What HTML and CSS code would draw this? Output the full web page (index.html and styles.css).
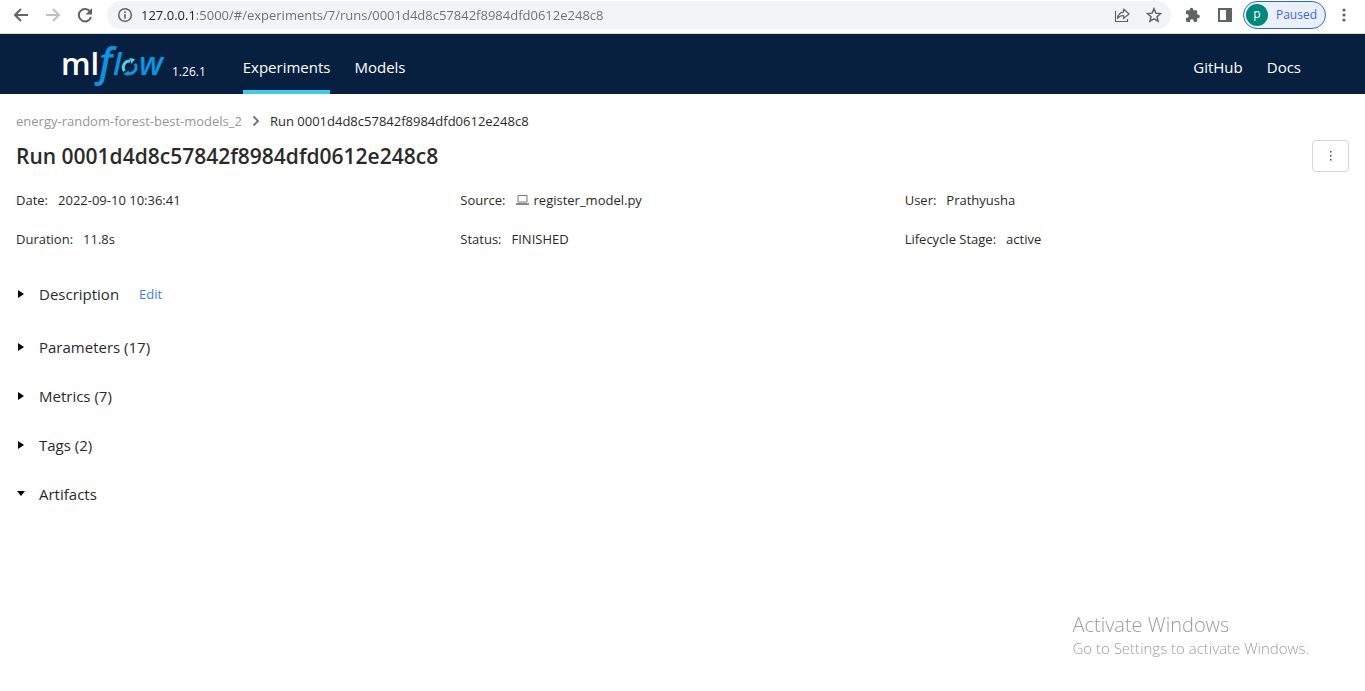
FILE: index.html
```html
<!DOCTYPE html>
<html lang="en">
<head>
<meta charset="utf-8">
<meta name="viewport" content="width=device-width, initial-scale=1">
<title>Run 0001d4d8c57842f8984dfd0612e248c8 - MLflow</title>
<link rel="stylesheet" href="styles.css">
</head>
<body>
<div class="browser-bar">
  <button class="tool" aria-label="Back"><svg width="16" height="16" viewBox="0 0 16 16" fill="none" stroke="#5f6368" stroke-width="2"><path d="M15 8H2M8 2 2 8l6 6"/></svg></button>
  <button class="tool" aria-label="Forward"><svg width="16" height="16" viewBox="0 0 16 16" fill="none" stroke="#bdc1c6" stroke-width="2"><path d="M1 8h13M8 2l6 6-6 6"/></svg></button>
  <button class="tool" aria-label="Reload"><svg width="16" height="16" viewBox="0 0 16 16"><path d="M13 4.5A6.2 6.2 0 1 0 14 10" fill="none" stroke="#5f6368" stroke-width="2"/><path d="M15 1v6.500H8.500z" fill="#5f6368"/></svg></button>
  <div class="address">
    <svg width="16" height="16" viewBox="0 0 16 16"><circle cx="8" cy="8" r="6.300" fill="none" stroke="#5f6368" stroke-width="1.500"/><path d="M7.200 4.300h1.600v1.600H7.200zM7.200 7h1.600v4.700H7.200z" fill="#5f6368"/></svg>
    <input class="url" type="text" aria-label="Address" value="127.0.0.1:5000/#/experiments/7/runs/0001d4d8c57842f8984dfd0612e248c8">
    <button class="tool" aria-label="Share"><svg width="16" height="16" viewBox="0 0 16 16" fill="none" stroke="#5f6368" stroke-width="1.200"><path d="M1.500 4v10.500h12V12M3.500 11.500C4 7.500 6 5.500 9.500 5.200V2L15 7l-5.500 4.500V8.500C6.500 8.500 5 9.300 3.500 11.500z" stroke-linejoin="round"/></svg></button>
    <button class="tool" aria-label="Bookmark"><svg width="16" height="16" viewBox="0 0 16 16"><path d="m8 1.800 1.850 4.350 4.750.4-3.600 3.100 1.100 4.600L8 11.800l-4.100 2.450L5 9.650l-3.600-3.100 4.750-.4z" fill="none" stroke="#5f6368" stroke-width="1.500"/></svg></button>
  </div>
  <button class="tool" aria-label="Extensions"><svg width="16" height="16" viewBox="0 0 16 16"><path d="M13 7.500h-.8V4.600c0-.8-.6-1.300-1.300-1.300H8.300v-.8a1.800 1.800 0 0 0-3.600 0v.8H2.300C1.500 3.300 1 3.800 1 4.600V7h.8a1.900 1.900 0 0 1 0 3.800H1v2.800c0 .8.500 1.400 1.300 1.400H5v-.8a1.900 1.900 0 0 1 3.800 0v.8h2.100c.7 0 1.300-.6 1.300-1.400v-2.400h.8a1.850 1.850 0 0 0 0-3.700z" fill="#5f6368"/></svg></button>
  <button class="tool" aria-label="Side panel"><svg width="16" height="16" viewBox="0 0 16 16"><path fill-rule="evenodd" d="M1 1h14v14H1zm2 2v10h6V3z" fill="#5f6368"/></svg></button>
  <button class="profile"><span class="avatar">p</span><span>Paused</span></button>
  <button class="tool" aria-label="Browser menu"><svg width="16" height="16" viewBox="0 0 16 16" fill="#5f6368"><circle cx="8" cy="3" r="1.600"/><circle cx="8" cy="8" r="1.600"/><circle cx="8" cy="13" r="1.600"/></svg></button>
</div>
<header class="nav">
  <a class="logo" href="#" aria-label="mlflow home">
    <svg width="106" height="60" viewBox="0 0 106 60">
      <g class="logo-type">
        <text x="-1" y="41" font-size="31" font-weight="600" fill="#fff">ml</text>
        <text x="37" y="42" font-size="39" font-style="italic" font-weight="600" fill="#0d94e0">f</text>
        <text x="51" y="41" font-size="31" font-weight="600" font-style="italic" fill="#0d94e0">l</text>
        <text x="77" y="41" font-size="32" font-weight="600" font-style="italic" fill="#0d94e0">w</text>
      </g>
      <g fill="none" stroke-width="3">
        <path d="M62.500 37a6.300 6.300 0 0 1 5.500-10" stroke="#55cdea"/>
        <path d="M66 39.300a6.300 6.300 0 0 0 7-9.500" stroke="#0d94e0"/>
      </g>
      <path d="m67.500 24 5.500 1-3.500 5z" fill="#55cdea"/>
      <path d="m67 36.500-.5 5.500-5.500-2z" fill="#0d94e0"/>
    </svg>
  </a>
  <span class="version">1.26.1</span>
  <nav class="links">
    <a class="current" href="#">Experiments</a>
    <a href="#">Models</a>
  </nav>
  <nav class="links outside">
    <a href="#">GitHub</a>
    <a href="#">Docs</a>
  </nav>
</header>
<main class="page">
  <nav class="crumbs" aria-label="Breadcrumb">
    <a href="#">energy-random-forest-best-models_2</a>
    <svg width="8" height="12" viewBox="0 0 8 12"><path d="m1.500 1.500 4.500 4.500-4.500 4.500" fill="none" stroke="#707070" stroke-width="1.800"/></svg>
    <span>Run 0001d4d8c57842f8984dfd0612e248c8</span>
  </nav>
  <div class="title-row">
    <h1>Run 0001d4d8c57842f8984dfd0612e248c8</h1>
    <button class="more" aria-label="More actions"><svg width="4" height="12" viewBox="0 0 4 12" fill="#444"><path d="M1 1h1.500v1.500H1zM1 5h1.500v1.500H1zM1 9h1.500v1.500H1z"/></svg></button>
  </div>
  <dl class="facts">
    <div><dt>Date:</dt><dd>2022-09-10 10:36:41</dd></div>
    <div><dt>Source:</dt><dd class="source"><svg width="13" height="12" viewBox="0 0 13 12"><path d="M2 1.500h9v6.500H2z" fill="none" stroke="#777"/><path d="M0 9h13v2H0z" fill="#888"/></svg>register_model.py</dd></div>
    <div><dt>User:</dt><dd>Prathyusha</dd></div>
    <div><dt>Duration:</dt><dd>11.8s</dd></div>
    <div><dt>Status:</dt><dd>FINISHED</dd></div>
    <div><dt>Lifecycle Stage:</dt><dd>active</dd></div>
  </dl>
  <div class="sections">
    <div class="section lead"><button class="toggle"><svg width="10" height="8" viewBox="0 0 10 8"><path d="m2 0 6 4-6 4z"/></svg>Description</button><button class="edit">Edit</button></div>
    <div class="section"><button class="toggle"><svg width="10" height="8" viewBox="0 0 10 8"><path d="m2 0 6 4-6 4z"/></svg>Parameters (17)</button></div>
    <div class="section"><button class="toggle"><svg width="10" height="8" viewBox="0 0 10 8"><path d="m2 0 6 4-6 4z"/></svg>Metrics (7)</button></div>
    <div class="section"><button class="toggle"><svg width="10" height="8" viewBox="0 0 10 8"><path d="m2 0 6 4-6 4z"/></svg>Tags (2)</button></div>
    <div class="section"><button class="toggle" aria-expanded="true"><svg width="10" height="8" viewBox="0 0 10 8"><path d="M1 1h8L5 6z"/></svg>Artifacts</button></div>
  </div>
</main>
<aside class="watermark">
  <p class="big">Activate Windows</p>
  <p>Go to Settings to activate Windows.</p>
</aside>
</body>
</html>
```
FILE: styles.css
```css
* { box-sizing: border-box; }
body {
  margin: 0;
  background: #fff;
  color: #2a2a2a;
  font: 13px/20px "Open Sans", "Noto Sans", sans-serif;
}
button { border: 0; padding: 0; background: none; color: inherit; font: inherit; cursor: pointer; }
a { color: inherit; text-decoration: none; }
svg { display: block; flex: none; }

.browser-bar {
  display: flex;
  align-items: center;
  gap: 16px;
  padding: 1px 13px 4px;
  border-bottom: 1px solid #d5dde2;
}
.address {
  flex: 1;
  display: flex;
  align-items: center;
  gap: 16px;
  height: 28px;
  margin: 0 -2px;
  padding: 0 9px 0 10px;
  border-radius: 14px;
  background: #f1f3f4;
}
.url {
  flex: 1;
  min-width: 0;
  margin-left: -8px;
  padding: 0;
  border: 0;
  outline: 0;
  font: inherit;
  color: transparent;
  background: linear-gradient(90deg, #202124 54px, #6b6f73 54px);
  background-clip: text;
  -webkit-background-clip: text;
}
.profile {
  display: flex;
  align-items: center;
  gap: 8px;
  height: 28px;
  margin: 0 -6px;
  padding: 0 8px 0 2px;
  border: 1px solid #3367c4;
  border-radius: 14px;
  background: #e9f0fc;
  color: #3c68c8;
  font-size: 12px;
}
.avatar { width: 22px; height: 22px; border-radius: 50%; background: #00897b; color: #fff; line-height: 20px; text-align: center; }

.nav {
  display: flex;
  align-items: stretch;
  height: 60px;
  padding: 0 64px 0 62px;
  background: #07203f;
  color: #fff;
}
.logo { display: flex; align-items: center; }
.logo-type { font-family: "Open Sans", "Noto Sans", sans-serif; }
.version { padding: 28px 0 0 4px; font-size: 12px; }
.links { display: flex; gap: 24px; margin-left: 37px; font-size: 15px; }
.links a { display: flex; align-items: center; padding: 12px 0 2px; border-bottom: 4px solid transparent; }
.links .current { border-bottom-color: #43c9ed; }
.outside { margin-left: auto; }

.page { padding: 17px 16px; }
.crumbs { display: flex; align-items: center; gap: 10px; }
.crumbs a { color: #969696; }
.title-row { display: flex; align-items: center; justify-content: space-between; margin-top: 9px; }
h1 { margin: 0; font-size: 21px; line-height: 32px; font-weight: 600; }
.more { display: flex; align-items: center; justify-content: center; width: 37px; height: 32px; border: 1px solid #d5d5d5; border-radius: 4px; }
.facts { display: grid; grid-template-columns: repeat(3, 1fr); row-gap: 19px; margin: 18px 0 0; }
.facts div { display: flex; gap: 10px; }
.facts dt, .facts dd { margin: 0; }
.source { display: flex; align-items: center; gap: 5px; }
.sections { display: flex; flex-direction: column; gap: 25px; margin-top: 33px; }
.section { display: flex; align-items: center; gap: 20px; line-height: 24px; }
.lead { margin-bottom: 4px; }
.toggle { display: flex; align-items: center; gap: 13px; font-size: 15px; }
.edit { color: #3b82e0; }
.watermark { position: fixed; right: 56px; bottom: 33px; color: #9c9c9c; font-weight: 300; }
.watermark p { margin: 0; font-size: 15px; }
.watermark .big { font-size: 20px; line-height: 26px; }
```
